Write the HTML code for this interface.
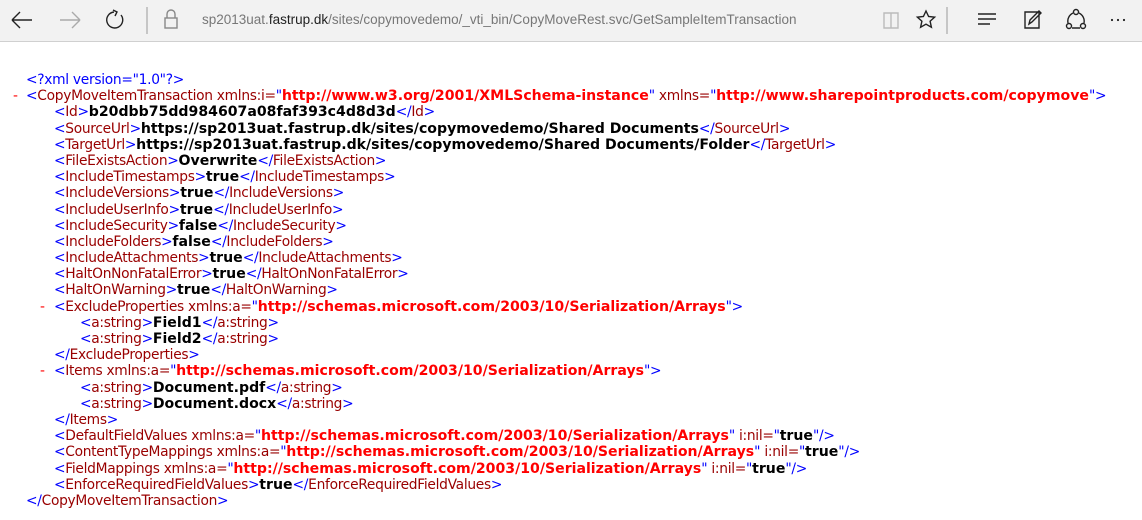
<!DOCTYPE html>
<html><head><meta charset="utf-8"><style>
body{margin:0;width:1142px;height:520px;overflow:hidden;background:#fff;font-family:"DejaVu Sans","Liberation Sans",sans-serif;}
.bar{position:absolute;left:0;top:0;width:1142px;height:41px;background:#f2f2f2;border-bottom:1px solid #d0d0d0;}
.url{position:absolute;left:202px;top:12px;font:13.5px "Liberation Sans",sans-serif;color:#777;}
.url b{font-weight:normal;color:#222}
.xml{position:absolute;left:0;top:72px;font-size:13.8px;letter-spacing:-0.3px;}
.l{height:16.2px;line-height:16.2px;white-space:nowrap;position:relative;}
.i0{padding-left:26px}.i1{padding-left:54px}.i2{padding-left:80px}
.b{color:#0000ff}.t{color:#990000}.v{color:#ff0000;font-weight:bold;font-size:14.1px;letter-spacing:0}.x{font-weight:bold;color:#000;font-size:14.1px;letter-spacing:0}
.d{position:absolute;color:#ff0000;top:0}
</style></head><body>
<div class="bar">
<svg width="1142" height="41" style="position:absolute;left:0;top:0" fill="none" stroke="#222" stroke-width="1.4">
<path d="M12 20H32M12 20l8-8M12 20l8 8"/>
<path d="M60 20H80M80 20l-8-8M80 20l-8 8" stroke="#aaa"/>
<path d="M114 12a8 8 0 1 0 7 3M113 10l4 2-2 4"/>
<path d="M147 7v27" stroke="#999" stroke-width="1"/>
<rect x="165" y="18" width="12" height="10" stroke="#888"/><path d="M167 18v-4a4 4 0 0 1 8 0v4" stroke="#888"/>
<path d="M884 13h7v15h-7zM891 13h7v15h-7z" stroke="#bbb"/>
<path d="M926 11l2.6 5.5 6 .7-4.5 4 1.3 6-5.4-3-5.4 3 1.3-6-4.5-4 6-.7z"/>
<path d="M947 7v27" stroke="#999" stroke-width="1"/>
<path d="M978 14h18M978 19h18M978 24h12"/>
<path d="M1025 12h14v16h-14zM1029 24l1-4 9-9 2 2-9 9z"/>
<circle cx="1076" cy="12" r="2.5"/><circle cx="1069" cy="26" r="2.5"/><circle cx="1083" cy="26" r="2.5"/><path d="M1073 13a9 9 0 0 0-5 10M1079 13a9 9 0 0 1 5 10M1072 28h8"/>
<g fill="#222" stroke="none"><circle cx="1112" cy="20" r="1.1"/><circle cx="1118" cy="20" r="1.1"/><circle cx="1124" cy="20" r="1.1"/></g>
</svg>
<div class="url">sp2013uat.<b>fastrup.dk</b>/sites/copymovedemo/_vti_bin/CopyMoveRest.svc/GetSampleItemTransaction</div>
</div>
<div class="xml">
<div class="l i0"><span class="b">&lt;?xml version="1.0"?&gt;</span></div>
<div class="l i0"><span class="d" style="left:13px">-</span><span class="b">&lt;</span><span class="t">CopyMoveItemTransaction xmlns:i=</span><span class="b">"</span><span class="v">http://www.w3.org/2001/XMLSchema-instance</span><span class="b">"</span> <span class="t">xmlns=</span><span class="b">"</span><span class="v">http://www.sharepointproducts.com/copymove</span><span class="b">"&gt;</span></div>
<div class="l i1"><span class="b">&lt;</span><span class="t">Id</span><span class="b">&gt;</span><span class="x">b20dbb75dd984607a08faf393c4d8d3d</span><span class="b">&lt;/</span><span class="t">Id</span><span class="b">&gt;</span></div>
<div class="l i1"><span class="b">&lt;</span><span class="t">SourceUrl</span><span class="b">&gt;</span><span class="x">https://sp2013uat.fastrup.dk/sites/copymovedemo/Shared Documents</span><span class="b">&lt;/</span><span class="t">SourceUrl</span><span class="b">&gt;</span></div>
<div class="l i1"><span class="b">&lt;</span><span class="t">TargetUrl</span><span class="b">&gt;</span><span class="x">https://sp2013uat.fastrup.dk/sites/copymovedemo/Shared Documents/Folder</span><span class="b">&lt;/</span><span class="t">TargetUrl</span><span class="b">&gt;</span></div>
<div class="l i1"><span class="b">&lt;</span><span class="t">FileExistsAction</span><span class="b">&gt;</span><span class="x">Overwrite</span><span class="b">&lt;/</span><span class="t">FileExistsAction</span><span class="b">&gt;</span></div>
<div class="l i1"><span class="b">&lt;</span><span class="t">IncludeTimestamps</span><span class="b">&gt;</span><span class="x">true</span><span class="b">&lt;/</span><span class="t">IncludeTimestamps</span><span class="b">&gt;</span></div>
<div class="l i1"><span class="b">&lt;</span><span class="t">IncludeVersions</span><span class="b">&gt;</span><span class="x">true</span><span class="b">&lt;/</span><span class="t">IncludeVersions</span><span class="b">&gt;</span></div>
<div class="l i1"><span class="b">&lt;</span><span class="t">IncludeUserInfo</span><span class="b">&gt;</span><span class="x">true</span><span class="b">&lt;/</span><span class="t">IncludeUserInfo</span><span class="b">&gt;</span></div>
<div class="l i1"><span class="b">&lt;</span><span class="t">IncludeSecurity</span><span class="b">&gt;</span><span class="x">false</span><span class="b">&lt;/</span><span class="t">IncludeSecurity</span><span class="b">&gt;</span></div>
<div class="l i1"><span class="b">&lt;</span><span class="t">IncludeFolders</span><span class="b">&gt;</span><span class="x">false</span><span class="b">&lt;/</span><span class="t">IncludeFolders</span><span class="b">&gt;</span></div>
<div class="l i1"><span class="b">&lt;</span><span class="t">IncludeAttachments</span><span class="b">&gt;</span><span class="x">true</span><span class="b">&lt;/</span><span class="t">IncludeAttachments</span><span class="b">&gt;</span></div>
<div class="l i1"><span class="b">&lt;</span><span class="t">HaltOnNonFatalError</span><span class="b">&gt;</span><span class="x">true</span><span class="b">&lt;/</span><span class="t">HaltOnNonFatalError</span><span class="b">&gt;</span></div>
<div class="l i1"><span class="b">&lt;</span><span class="t">HaltOnWarning</span><span class="b">&gt;</span><span class="x">true</span><span class="b">&lt;/</span><span class="t">HaltOnWarning</span><span class="b">&gt;</span></div>
<div class="l i1"><span class="d" style="left:40px">-</span><span class="b">&lt;</span><span class="t">ExcludeProperties xmlns:a=</span><span class="b">"</span><span class="v">http://schemas.microsoft.com/2003/10/Serialization/Arrays</span><span class="b">"&gt;</span></div>
<div class="l i2"><span class="b">&lt;</span><span class="t">a:string</span><span class="b">&gt;</span><span class="x">Field1</span><span class="b">&lt;/</span><span class="t">a:string</span><span class="b">&gt;</span></div>
<div class="l i2"><span class="b">&lt;</span><span class="t">a:string</span><span class="b">&gt;</span><span class="x">Field2</span><span class="b">&lt;/</span><span class="t">a:string</span><span class="b">&gt;</span></div>
<div class="l i1"><span class="b">&lt;/</span><span class="t">ExcludeProperties</span><span class="b">&gt;</span></div>
<div class="l i1"><span class="d" style="left:40px">-</span><span class="b">&lt;</span><span class="t">Items xmlns:a=</span><span class="b">"</span><span class="v">http://schemas.microsoft.com/2003/10/Serialization/Arrays</span><span class="b">"&gt;</span></div>
<div class="l i2"><span class="b">&lt;</span><span class="t">a:string</span><span class="b">&gt;</span><span class="x">Document.pdf</span><span class="b">&lt;/</span><span class="t">a:string</span><span class="b">&gt;</span></div>
<div class="l i2"><span class="b">&lt;</span><span class="t">a:string</span><span class="b">&gt;</span><span class="x">Document.docx</span><span class="b">&lt;/</span><span class="t">a:string</span><span class="b">&gt;</span></div>
<div class="l i1"><span class="b">&lt;/</span><span class="t">Items</span><span class="b">&gt;</span></div>
<div class="l i1"><span class="b">&lt;</span><span class="t">DefaultFieldValues xmlns:a=</span><span class="b">"</span><span class="v">http://schemas.microsoft.com/2003/10/Serialization/Arrays</span><span class="b">"</span> <span class="t">i:nil=</span><span class="b">"</span><span class="x">true</span><span class="b">"/&gt;</span></div>
<div class="l i1"><span class="b">&lt;</span><span class="t">ContentTypeMappings xmlns:a=</span><span class="b">"</span><span class="v">http://schemas.microsoft.com/2003/10/Serialization/Arrays</span><span class="b">"</span> <span class="t">i:nil=</span><span class="b">"</span><span class="x">true</span><span class="b">"/&gt;</span></div>
<div class="l i1"><span class="b">&lt;</span><span class="t">FieldMappings xmlns:a=</span><span class="b">"</span><span class="v">http://schemas.microsoft.com/2003/10/Serialization/Arrays</span><span class="b">"</span> <span class="t">i:nil=</span><span class="b">"</span><span class="x">true</span><span class="b">"/&gt;</span></div>
<div class="l i1"><span class="b">&lt;</span><span class="t">EnforceRequiredFieldValues</span><span class="b">&gt;</span><span class="x">true</span><span class="b">&lt;/</span><span class="t">EnforceRequiredFieldValues</span><span class="b">&gt;</span></div>
<div class="l i0"><span class="b">&lt;/</span><span class="t">CopyMoveItemTransaction</span><span class="b">&gt;</span></div>
</div>
</body></html>
